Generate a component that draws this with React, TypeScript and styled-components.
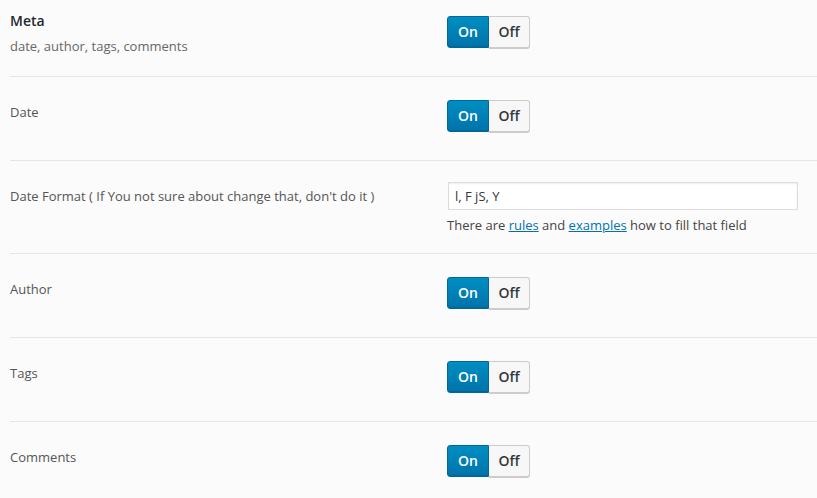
import { createGlobalStyle, styled } from 'styled-components';

const GlobalStyle = createGlobalStyle`
  html, body {
    margin: 0;
    padding: 0;
    background: #fbfbfb;
  }
  body {
    font-family: "Open Sans", "Liberation Sans", sans-serif;
    font-size: 13px;
    color: #555;
  }
`;

const Page = styled.div`
  padding: 0 0 0 10px;
`;

const Row = styled.div<{ $first?: boolean; $padBottom?: number }>`
  display: flex;
  align-items: flex-start;
  padding: ${(p) => (p.$first ? '12px 0 21px' : `23px 0 ${p.$padBottom ?? 28}px`)};
  border-top: ${(p) => (p.$first ? 'none' : '1px solid #e5e5e5')};
`;

const LabelCol = styled.div<{ $first?: boolean }>`
  width: 437px;
  flex-shrink: 0;
  padding-top: ${(p) => (p.$first ? '0' : '3px')};
`;

const Title = styled.div`
  font-size: 14px;
  font-weight: 600;
  color: #23282d;
  line-height: 18px;
`;

const Label = styled.div`
  font-size: 13px;
  color: #555;
  line-height: 18px;
`;

const Desc = styled.div`
  font-size: 13px;
  color: #666;
  line-height: 18px;
  margin-top: 7px;
`;

const ControlCol = styled.div<{ $offset?: number }>`
  flex: 1;
  padding-top: ${(p) => p.$offset ?? 0}px;
`;

const Switch = styled.div`
  display: inline-flex;
  height: 32px;
  border-radius: 3px;
`;

const SwitchPart = styled.button<{ $on: boolean; $left: boolean }>`
  font-family: inherit;
  font-size: 14px;
  font-weight: 600;
  height: 32px;
  width: ${(p) => (p.$left ? '42px' : '41px')};
  padding: 0;
  margin: 0;
  cursor: pointer;
  border: 1px solid ${(p) => (p.$on ? '#006799' : '#ccc')};
  border-left-width: ${(p) => (p.$left ? '1px' : '0')};
  border-radius: ${(p) => (p.$left ? '3px 0 0 3px' : '0 3px 3px 0')};
  background: ${(p) => (p.$on ? 'linear-gradient(#008ec2, #0073aa)' : '#f7f7f7')};
  color: ${(p) => (p.$on ? '#fff' : '#32373c')};
  box-shadow: ${(p) => (p.$on ? 'inset 0 -1px 0 #006799' : '0 1px 0 #ccc')};
  line-height: 30px;
`;

const Input = styled.input`
  display: block;
  box-sizing: border-box;
  width: 350px;
  height: 28px;
  margin: -2px 0 0 1px;
  padding: 0 6px;
  font-family: inherit;
  font-size: 13px;
  color: #32373c;
  background: #fff;
  border: 1px solid #ddd;
  box-shadow: inset 0 1px 2px rgba(0, 0, 0, 0.07);
  outline: none;
`;

const Help = styled.p`
  margin: 6px 0 0;
  font-size: 13px;
  line-height: 18px;
  color: #444;
`;

const HelpLink = styled.a`
  color: #0073aa;
  text-decoration: underline;
`;

function OnOff() {
  return (
    <Switch>
      <SwitchPart type="button" $on $left>
        On
      </SwitchPart>
      <SwitchPart type="button" $on={false} $left={false}>
        Off
      </SwitchPart>
    </Switch>
  );
}

const toggles = ['Author', 'Tags', 'Comments'];

export default function App() {
  return (
    <>
      <GlobalStyle />
      <Page>
        <Row $first>
          <LabelCol $first>
            <Title>Meta</Title>
            <Desc>date, author, tags, comments</Desc>
          </LabelCol>
          <ControlCol $offset={4}>
            <OnOff />
          </ControlCol>
        </Row>
        <Row>
          <LabelCol>
            <Label>Date</Label>
          </LabelCol>
          <ControlCol>
            <OnOff />
          </ControlCol>
        </Row>
        <Row $padBottom={19}>
          <LabelCol>
            <Label>Date Format ( If You not sure about change that, don't do it )</Label>
          </LabelCol>
          <ControlCol>
            <Input defaultValue="l, F jS, Y" />
            <Help>
              There are <HelpLink href="#">rules</HelpLink> and <HelpLink href="#">examples</HelpLink> how to fill
              that field
            </Help>
          </ControlCol>
        </Row>
        {toggles.map((name) => (
          <Row key={name}>
            <LabelCol>
              <Label>{name}</Label>
            </LabelCol>
            <ControlCol>
              <OnOff />
            </ControlCol>
          </Row>
        ))}
      </Page>
    </>
  );
}
